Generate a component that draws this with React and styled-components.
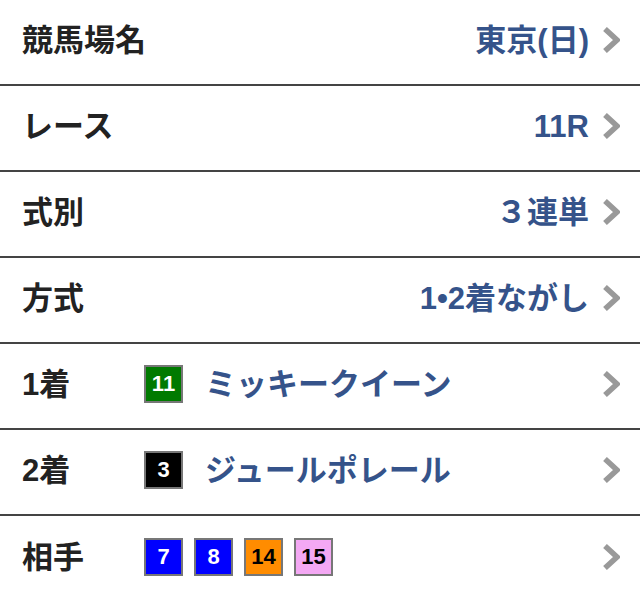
import React from "react";
import styled, { createGlobalStyle } from "styled-components";

const GlobalStyle = createGlobalStyle`
    html, body {
        margin: 0;
        padding: 0;
        background: #fff;
    }
    body {
        font-family: "Liberation Sans", "Noto Sans CJK JP", sans-serif;
        color: #222;
    }
`;

const List = styled.ul`
    list-style: none;
    margin: 0;
    padding: 0;
    width: 640px;
`;

const Row = styled.li`
    box-sizing: border-box;
    display: flex;
    align-items: center;
    height: 86px;
    padding: 0 20px 4px 22px;
    border-bottom: 2px solid #444;
    &:last-child {
        border-bottom: none;
    }
`;

const Label = styled.span`
    flex: 0 0 122px;
    white-space: nowrap;
    font-size: 31px;
    font-weight: bold;
    color: #222;
    line-height: 1;
`;

const Value = styled.span`
    flex: 1;
    text-align: right;
    white-space: nowrap;
    font-size: 31px;
    font-weight: bold;
    color: #35538a;
    padding-right: 13px;
    line-height: 1;
`;

const Horse = styled.div`
    flex: 1;
    display: flex;
    align-items: center;
    gap: 11px;
`;

const Name = styled.span`
    margin-left: 11px;
    white-space: nowrap;
    font-size: 31px;
    font-weight: bold;
    color: #35538a;
    line-height: 1;
`;

const Badge = styled.span`
    box-sizing: border-box;
    width: 39px;
    height: 38px;
    display: inline-flex;
    align-items: center;
    justify-content: center;
    border: 2px solid #777;
    background: ${props => props.bg};
    color: ${props => props.fg};
    font-family: "Liberation Sans", sans-serif;
    font-size: 22px;
    font-weight: bold;
`;

const Chevron = () => (
    <svg width="18" height="26" viewBox="0 0 18 26">
        <path d="M3 2 L15 13 L3 24" fill="none" stroke="#999" strokeWidth="5.5" strokeLinejoin="miter" />
    </svg>
);

const waku = {
    3: ["#000", "#fff"],
    7: ["#0000ff", "#fff"],
    8: ["#0000ff", "#fff"],
    11: ["#007a00", "#fff"],
    14: ["#ff8c00", "#000"],
    15: ["#f4a8f4", "#000"]
};

const settings = [
    { label: "競馬場名", value: "東京(日)" },
    { label: "レース", value: "11R" },
    { label: "式別", value: "３連単" },
    { label: "方式", value: "1•2着ながし" }
];

const picks = [
    { label: "1着", nums: [11], name: "ミッキークイーン" },
    { label: "2着", nums: [3], name: "ジュールポレール" },
    { label: "相手", nums: [7, 8, 14, 15] }
];

const App = () => (
    <>
        <GlobalStyle />
        <List>
            {settings.map(item => (
                <Row key={item.label}>
                    <Label>{item.label}</Label>
                    <Value>{item.value}</Value>
                    <Chevron />
                </Row>
            ))}
            {picks.map(item => (
                <Row key={item.label}>
                    <Label>{item.label}</Label>
                    <Horse>
                        {item.nums.map(n => (
                            <Badge key={n} bg={waku[n][0]} fg={waku[n][1]}>{n}</Badge>
                        ))}
                        {item.name && <Name>{item.name}</Name>}
                    </Horse>
                    <Chevron />
                </Row>
            ))}
        </List>
    </>
);

export default App;
